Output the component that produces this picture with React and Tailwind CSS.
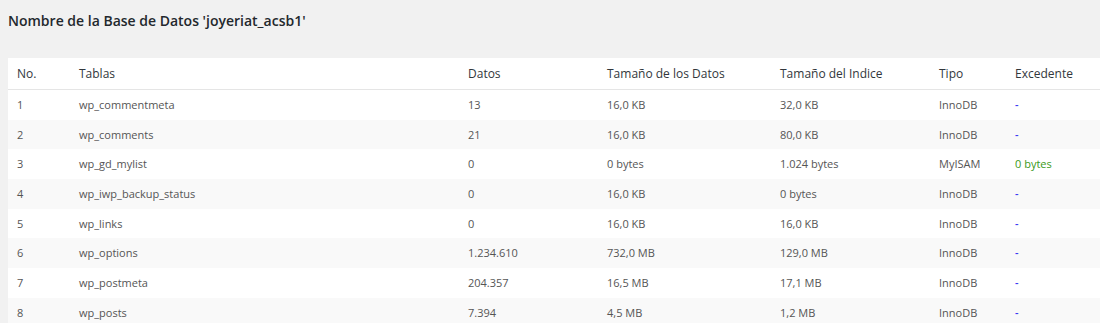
export default function App() {
  const rows = [
    ["1", "wp_commentmeta", "13", "16,0 KB", "32,0 KB", "InnoDB", "-"],
    ["2", "wp_comments", "21", "16,0 KB", "80,0 KB", "InnoDB", "-"],
    ["3", "wp_gd_mylist", "0", "0 bytes", "1.024 bytes", "MyISAM", "0 bytes"],
    ["4", "wp_iwp_backup_status", "0", "16,0 KB", "0 bytes", "InnoDB", "-"],
    ["5", "wp_links", "0", "16,0 KB", "16,0 KB", "InnoDB", "-"],
    ["6", "wp_options", "1.234.610", "732,0 MB", "129,0 MB", "InnoDB", "-"],
    ["7", "wp_postmeta", "204.357", "16,5 MB", "17,1 MB", "InnoDB", "-"],
    ["8", "wp_posts", "7.394", "4,5 MB", "1,2 MB", "InnoDB", "-"],
  ];
  const heights = ["h-[30px]", "h-[29px]", "h-[30px]", "h-[30px]", "h-[29px]", "h-[30px]", "h-[30px]", "h-[30px]"];
  const headers = ["No.", "Tablas", "Datos", "Tamaño de los Datos", "Tamaño del Indice", "Tipo", "Excedente"];
  const grid = "grid grid-cols-[62px_389px_139px_173px_159px_76px_1fr]";
  return (
    <div className="w-[1100px] h-[323px] overflow-hidden bg-[#f1f1f1] pl-[8px]" style={{ fontFamily: '"Open Sans", sans-serif' }}>
      <h2 className="pt-[11px] h-[58px] text-[14px] font-semibold text-[#23282d] leading-[20px]">
        Nombre de la Base de Datos 'joyeriat_acsb1'
      </h2>
      <div className="bg-white">
        <div className={`${grid} h-[32px] border-b border-[#e5e5e5] items-center text-[12px] text-[#32373c]`}>
          {headers.map((h) => (
            <div key={h} className="px-[9px] whitespace-nowrap">{h}</div>
          ))}
        </div>
        {rows.map((r, i) => (
          <div
            key={r[0]}
            className={`${grid} ${heights[i]} items-center text-[11px] leading-[16px] text-[#555] ${i % 2 === 1 ? "bg-[#f9f9f9]" : "bg-white"}`}
          >
            {r.map((c, j) => (
              <div
                key={j}
                className={`px-[9px] whitespace-nowrap ${
                  j === 6 ? (c === "-" ? "text-[#3b3bf2] font-semibold" : "text-[#3a9a20]") : ""
                }`}
              >
                {c}
              </div>
            ))}
          </div>
        ))}
      </div>
    </div>
  );
}
